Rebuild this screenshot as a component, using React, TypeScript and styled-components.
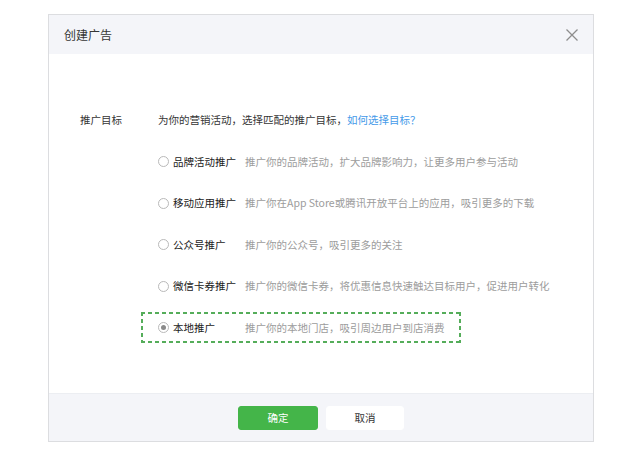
import React from 'react';
import styled, { createGlobalStyle } from 'styled-components';

const GlobalStyle = createGlobalStyle`
    html, body {
        margin: 0;
        padding: 0;
        background: #ffffff;
    }
    body {
        font-family: "Noto Sans CJK SC", "Noto Sans", "Liberation Sans", sans-serif;
        color: #353535;
    }
`;

const Page = styled.div`
    width: 640px;
    height: 453px;
    padding: 14px 0 0 48px;
    box-sizing: border-box;
`;

const Dialog = styled.div`
    width: 546px;
    height: 428px;
    box-sizing: border-box;
    border: 1px solid #dcdde0;
    display: flex;
    flex-direction: column;
    background: #ffffff;
`;

const Header = styled.div`
    height: 39px;
    flex: none;
    background: #f4f5f9;
    display: flex;
    align-items: center;
    justify-content: space-between;
    padding: 0 14px 0 15px;
`;

const Title = styled.span`
    font-size: 12px;
    line-height: 16px;
    color: #353535;
`;

const CloseButton = styled.button`
    border: none;
    background: none;
    padding: 0;
    width: 14px;
    height: 14px;
    display: flex;
    cursor: pointer;
`;

const Body = styled.div`
    flex: 1;
    padding: 58px 0 0 31px;
    display: grid;
    grid-template-columns: 78px 1fr;
    align-content: start;
`;

const FieldLabel = styled.div`
    font-size: 10.5px;
    line-height: 16px;
    color: #353535;
`;

const FieldContent = styled.div`
    display: flex;
    flex-direction: column;
    gap: 25.5px;
`;

const Hint = styled.div`
    font-size: 10.5px;
    line-height: 16px;
    color: #353535;
    white-space: nowrap;
`;

const HelpLink = styled.a`
    color: #459ae9;
    text-decoration: none;
`;

// green dashed annotation frame drawn with gradients for short dashes
const dashH = 'repeating-linear-gradient(90deg, #55ad5a 0 4px, transparent 4px 7px)';
const dashV = 'repeating-linear-gradient(180deg, #55ad5a 0 4px, transparent 4px 7px)';

const Option = styled.label<{ $highlighted?: boolean }>`
    position: relative;
    display: flex;
    align-items: center;
    height: 16px;
    font-size: 10.5px;
    line-height: 16px;
    white-space: nowrap;
    cursor: pointer;

    &::after {
        content: '';
        display: ${(p) => (p.$highlighted ? 'block' : 'none')};
        position: absolute;
        left: -17px;
        top: -8px;
        width: 320px;
        height: 31px;
        background:
            ${dashH} top left / 100% 2px no-repeat,
            ${dashH} bottom left / 100% 2px no-repeat,
            ${dashV} top left / 2px 100% no-repeat,
            ${dashV} top right / 2px 100% no-repeat;
        pointer-events: none;
    }
`;

const RadioCircle = styled.span<{ $checked?: boolean }>`
    width: 9px;
    height: 9px;
    flex: none;
    border-radius: 50%;
    border: 1px solid #b9b9b9;
    background: #ffffff;
    margin-right: 4px;
    display: flex;
    align-items: center;
    justify-content: center;

    &::before {
        content: '';
        display: ${(p) => (p.$checked ? 'block' : 'none')};
        width: 5px;
        height: 5px;
        border-radius: 50%;
        background: #8a8a8a;
    }
`;

const OptionName = styled.span`
    width: 72px;
    flex: none;
    color: #222222;
`;

const OptionDesc = styled.span`
    color: #9c9c9c;
`;

const Footer = styled.div`
    height: 47px;
    flex: none;
    background: #f4f5f9;
    border-top: 1px solid #eceef2;
    display: flex;
    align-items: center;
    justify-content: center;
    gap: 8px;
`;

const Button = styled.button<{ $primary?: boolean }>`
    width: ${(p) => (p.$primary ? '80px' : '78px')};
    height: 24px;
    border-radius: 3px;
    border: 1px solid ${(p) => (p.$primary ? '#44b549' : '#ffffff')};
    background: ${(p) => (p.$primary ? '#44b549' : '#ffffff')};
    color: ${(p) => (p.$primary ? '#ffffff' : '#353535')};
    font-family: inherit;
    font-size: 10.5px;
    line-height: 16px;
    padding: 0;
    cursor: pointer;
`;

const options = [
    { name: '品牌活动推广', desc: '推广你的品牌活动，扩大品牌影响力，让更多用户参与活动' },
    { name: '移动应用推广', desc: '推广你在App Store或腾讯开放平台上的应用，吸引更多的下载' },
    { name: '公众号推广', desc: '推广你的公众号，吸引更多的关注' },
    { name: '微信卡券推广', desc: '推广你的微信卡券，将优惠信息快速触达目标用户，促进用户转化' },
    { name: '本地推广', desc: '推广你的本地门店，吸引周边用户到店消费' },
];

export default function App() {
    const selected = 4;

    return (
        <Page>
            <GlobalStyle />
            <Dialog>
                <Header>
                    <Title>创建广告</Title>
                    <CloseButton aria-label="关闭">
                        <svg width="14" height="14" viewBox="0 0 14 14">
                            <path
                                d="M1.5 1.5 L12.5 12.5 M12.5 1.5 L1.5 12.5"
                                stroke="#8d8d8d"
                                strokeWidth="1.3"
                                fill="none"
                            />
                        </svg>
                    </CloseButton>
                </Header>
                <Body>
                    <FieldLabel>推广目标</FieldLabel>
                    <FieldContent>
                        <Hint>
                            为你的营销活动，选择匹配的推广目标，
                            <HelpLink href="#">如何选择目标？</HelpLink>
                        </Hint>
                        {options.map((o, i) => (
                            <Option key={o.name} $highlighted={i === selected}>
                                <RadioCircle $checked={i === selected} />
                                <OptionName>{o.name}</OptionName>
                                <OptionDesc>{o.desc}</OptionDesc>
                            </Option>
                        ))}
                    </FieldContent>
                </Body>
                <Footer>
                    <Button $primary>确定</Button>
                    <Button>取消</Button>
                </Footer>
            </Dialog>
        </Page>
    );
}
